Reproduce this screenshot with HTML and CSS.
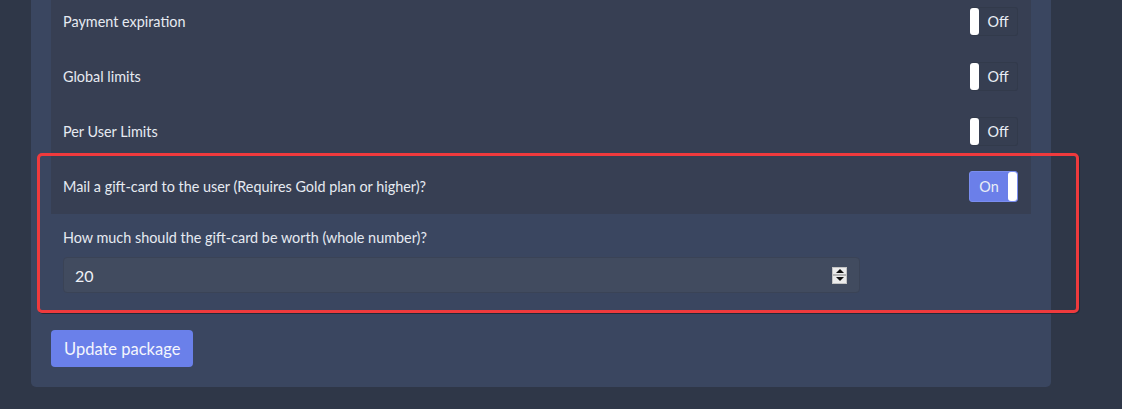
FILE: index.html
```html
<!DOCTYPE html>
<html lang="en">
<head>
<meta charset="utf-8">
<title>Package settings</title>
<link rel="stylesheet" href="styles.css">
</head>
<body>
<div class="page">
  <div class="card">
    <div class="panel">
      <div class="row">
        <span class="row-label">Payment expiration</span>
        <span class="toggle off"><span class="knob"></span><span class="toggle-text">Off</span></span>
      </div>
      <div class="row">
        <span class="row-label">Global limits</span>
        <span class="toggle off"><span class="knob"></span><span class="toggle-text">Off</span></span>
      </div>
      <div class="row">
        <span class="row-label">Per User Limits</span>
        <span class="toggle off"><span class="knob"></span><span class="toggle-text">Off</span></span>
      </div>
      <div class="row">
        <span class="row-label">Mail a gift-card to the user (Requires Gold plan or higher)?</span>
        <span class="toggle on"><span class="toggle-text">On</span><span class="knob"></span></span>
      </div>
    </div>
    <div class="field">
      <label class="field-label" for="worth">How much should the gift-card be worth (whole number)?</label>
      <div class="input">
        <input id="worth" class="input-text" type="text" value="20">
        <span class="spinner"><span class="spin-btn"><span class="tri up"></span></span><span class="spin-btn"><span class="tri down"></span></span></span>
      </div>
    </div>
    <button class="btn" type="button">Update package</button>
    <div class="highlight"></div>
  </div>
</div>
</body>
</html>
```
FILE: styles.css
```css
html, body {
  margin: 0;
  padding: 0;
}
body {
  background: #2f3748;
  font-family: Lato, "Noto Sans", sans-serif;
  color: #e6eaf1;
  height: 409px;
  overflow: hidden;
}
.page {
  padding-left: 31px;
}
.card {
  position: relative;
  width: 980px;
  margin-top: -6px;
  padding: 0 20px 20px;
  background: #3a4660;
  border-radius: 0 0 5px 5px;
}
.panel {
  background: #373f53;
  padding: 0 13px 0 12px;
}
.row {
  height: 55px;
  display: flex;
  align-items: center;
  justify-content: space-between;
  font-size: 14.4px;
}
.toggle {
  display: flex;
  align-items: stretch;
  height: 29px;
  width: 48px;
  box-sizing: border-box;
  border-radius: 3px;
  font-size: 14.4px;
}
.toggle.off {
  border: 1px solid #323a4b;
  background: #363e51;
  border-left: none;
}
.toggle.on {
  height: 31px;
  width: 49px;
  background: #6b7fe9;
  border: 1px solid #7a8df0;
}
.knob {
  width: 9px;
  background: #ffffff;
  border-radius: 3px;
}
.toggle-text {
  flex: 1;
  display: flex;
  align-items: center;
  justify-content: center;
  color: #e9eef6;
}
.field {
  padding: 13px 0 0 12px;
}
.field-label {
  display: block;
  font-size: 14.4px;
  line-height: 21px;
  margin-bottom: 9px;
}
.input {
  width: 797px;
  height: 36px;
  box-sizing: border-box;
  background: #414b5f;
  border: 1px solid #3a4356;
  border-radius: 4px;
  display: flex;
  align-items: center;
  padding: 0 12px 0 11px;
}
.input-text {
  flex: 1;
  background: transparent;
  border: none;
  outline: none;
  color: #eef1f6;
  font-family: Lato, "Noto Sans", sans-serif;
  font-size: 16px;
  padding: 0;
}
.spinner {
  width: 15px;
  height: 17px;
  box-sizing: border-box;
  background: #ececec;
  border: 1px solid #c4c4c4;
  display: flex;
  flex-direction: column;
}
.spin-btn {
  flex: 1;
  display: flex;
  align-items: center;
  justify-content: center;
}
.spin-btn + .spin-btn {
  border-top: 2px solid #b5b5b5;
}
.tri {
  width: 0;
  height: 0;
  border-left: 4px solid transparent;
  border-right: 4px solid transparent;
}
.tri.up {
  border-bottom: 4px solid #111;
}
.tri.down {
  border-top: 4px solid #111;
}
.btn {
  display: block;
  margin-top: 37px;
  height: 37px;
  padding: 0 13px;
  background: #6a80ea;
  color: #f4f6fd;
  border: none;
  border-radius: 4px;
  font-family: Lato, "Noto Sans", sans-serif;
  font-size: 16.5px;
}
.highlight {
  position: absolute;
  left: 6px;
  top: 159px;
  width: 1042px;
  height: 160px;
  box-sizing: border-box;
  border: 3px solid #ef3a3d;
  border-radius: 5px;
  box-shadow: 1px 1px 0 #232937;
  pointer-events: none;
}
```
